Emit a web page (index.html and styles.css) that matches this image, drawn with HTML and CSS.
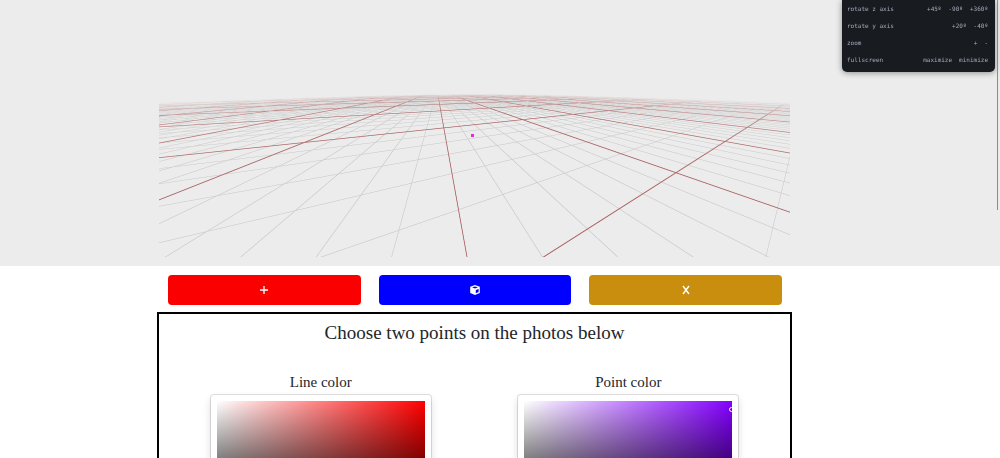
FILE: index.html
```html
<!DOCTYPE html>
<html lang="en">
<head>
<meta charset="utf-8">
<title>Choose two points</title>
<link rel="stylesheet" href="styles.css">
</head>
<body>
<section class="scene">
  <canvas class="floor" width="1262" height="514" aria-label="3D floor grid"></canvas>
</section>

<aside class="panel">
  <div class="panel-row"><span>rotate z axis</span><div class="panel-actions"><button>+45º</button><button>-90º</button><button>+360º</button></div></div>
  <div class="panel-row"><span>rotate y axis</span><div class="panel-actions"><button>+20º</button><button>-40º</button></div></div>
  <div class="panel-row"><span>zoom</span><div class="panel-actions"><button>+</button><button>-</button></div></div>
  <div class="panel-row"><span>fullscreen</span><div class="panel-actions"><button>maximize</button><button>minimize</button></div></div>
</aside>
<div class="scroll-thumb"></div>

<main class="content">
  <div class="toolbar">
    <button class="tool add" aria-label="Add"><svg width="10" height="10" viewBox="0 0 10 10"><path d="M5 1v8M1 5h8" stroke="#fff" stroke-width="1.3"/></svg></button>
    <button class="tool cube" aria-label="Cube"><svg width="10" height="10" viewBox="0 0 10 10"><path d="M5 0 9.8 1.7V8L5 10 .2 8V1.7Z" fill="#fff"/><path d="M2 2.3 5 1.4l3 .9L5 3.4ZM5.8 5 8.6 3.9v3.2L5.8 8.3Z" fill="#00f"/></svg></button>
    <button class="tool close" aria-label="Close"><svg width="10" height="10" viewBox="0 0 10 10"><path d="M2 1l6 8M8 1 2 9" stroke="#fff" stroke-width="1.4"/></svg></button>
  </div>
  <section class="chooser">
    <h1 class="title">Choose two points on the photos below</h1>
    <div class="columns">
      <div class="column">
        <h2 class="label">Line color</h2>
        <div class="picker"><div class="field red"></div></div>
      </div>
      <div class="column">
        <h2 class="label">Point color</h2>
        <div class="picker"><div class="field violet"><span class="handle"></span></div></div>
      </div>
    </div>
  </section>
</main>
<script src="grid.js"></script>
</body>
</html>
```

FILE: styles.css
```css
* { box-sizing: border-box; }
body {
  margin: 0;
  height: 100vh;
  overflow: hidden;
  background: #fff;
  color: #212529;
  font-family: "Liberation Serif", "Times New Roman", serif;
}
button { border: 0; padding: 0; font: inherit; color: inherit; cursor: pointer; }
.scene {
  padding: 0 210px 9px 159px;
  background: #ececec;
}
.floor { display: block; width: 100%; }
.panel {
  position: fixed;
  top: 0;
  right: 5px;
  width: 153px;
  padding: 0 7px 4px 5px;
  border-radius: 0 0 5px 5px;
  background: #181c20;
  box-shadow: 0 1px 6px rgba(0, 0, 0, .4);
  color: #a4aabb;
  font: 6px/17px "DejaVu Sans Mono", monospace;
}
.panel-row { display: flex; justify-content: space-between; }
.panel-actions { display: flex; gap: 7px; }
.panel-actions button { background: none; }
.scroll-thumb {
  position: fixed;
  top: 0;
  right: 2px;
  width: 1px;
  height: 210px;
  background: #8b8b8b;
}
.content { padding: 9px 208px 0 157px; }
.toolbar {
  display: grid;
  grid-template-columns: repeat(3, 1fr);
  gap: 18px;
  padding: 0 10px 0 11px;
}
.tool {
  display: flex;
  align-items: center;
  justify-content: center;
  height: 30px;
  border-radius: 4px;
}
.add { background: #fa0000; }
.cube { background: #00f; }
.close { background: #c98e0d; }
.chooser {
  margin-top: 7px;
  padding: 7px 8px 0;
  border: 2px solid #000;
}
.title, .label { margin: 0; font-weight: 400; text-align: center; }
.title { font-size: 19px; line-height: 24px; }
.columns { display: grid; grid-template-columns: 1fr 1fr; margin-top: 27px; }
.label { font-size: 15px; line-height: 20px; }
.picker {
  width: 220px;
  margin: 3px auto 0;
  padding: 6px;
  border-radius: 3px;
  background: #fff;
  box-shadow: 0 0 0 1px rgba(0, 0, 0, .12), 0 4px 8px rgba(0, 0, 0, .15);
}
.field { position: relative; height: 116px; overflow: hidden; }
.red { background: linear-gradient(to top, #000, transparent), linear-gradient(to right, #fff, #f00); }
.violet { background: linear-gradient(to top, #000, transparent), linear-gradient(to right, #fff, #8400ff); }
.handle {
  position: absolute;
  top: 6px;
  right: -2px;
  width: 5px;
  height: 5px;
  border: 1px solid #fff;
  border-radius: 50%;
}
```

FILE: grid.js
```js
// Infinite floor grid: both line families meet the horizon at their own vanishing point.
const canvas = document.querySelector('.floor');
const ctx = canvas.getContext('2d');
const { width, height } = canvas;
const image = ctx.createImageData(width, height);
const SCALE = 2, STEP = 1 / SCALE;
const HORIZON = 90, FOCAL = 112, CENTER = 316;
const LEFT_VP = 278, RIGHT_VP = 647;
const PER_SECTION = 6;

function cell(x, y) {
  const k = 167 / (y - HORIZON);
  return [
    (LEFT_VP + (x - LEFT_VP) * k - 308) / 75.4,
    (384.5 - RIGHT_VP - (x - RIGHT_VP) * k) / 222.3
  ];
}
function line(p, px, py, size, thickness) {
  const d = [0, 1].map(i => {
    const w = (Math.abs(px[i] - p[i]) + Math.abs(py[i] - p[i])) / size;
    const r = p[i] / size;
    return Math.abs(r - Math.round(r)) / w;
  });
  return 1 - Math.min(Math.max(Math.min(d[0], d[1]) + 1 - thickness, 0), 1);
}
for (let row = (HORIZON + 3) * SCALE; row < height; row++) {
  for (let col = 0; col < width; col++) {
    const x = (col + .5) * STEP, y = (row + .5) * STEP;
    const spread = Math.hypot(1, (x - CENTER) / FOCAL);
    const fade = Math.max(0, 1 - 4.2 * spread / (y - HORIZON));
    const p = cell(x, y), px = cell(x + STEP, y), py = cell(x, y + STEP);
    const minor = line(p, px, py, 1, .8) * .42;
    const major = line(p, px, py, PER_SECTION, 1.1);
    const mix = Math.min(1, major * 2);
    const alpha = Math.min(1, minor * (1 - mix) + major * .9) * fade;
    image.data.set([105 + 40 * mix, 105 - 65 * mix, 105 - 65 * mix, alpha * 255], (row * width + col) * 4);
  }
}
ctx.putImageData(image, 0, 0);
ctx.fillStyle = '#e52be0';
ctx.fillRect(624, 268, 6, 6);
```
